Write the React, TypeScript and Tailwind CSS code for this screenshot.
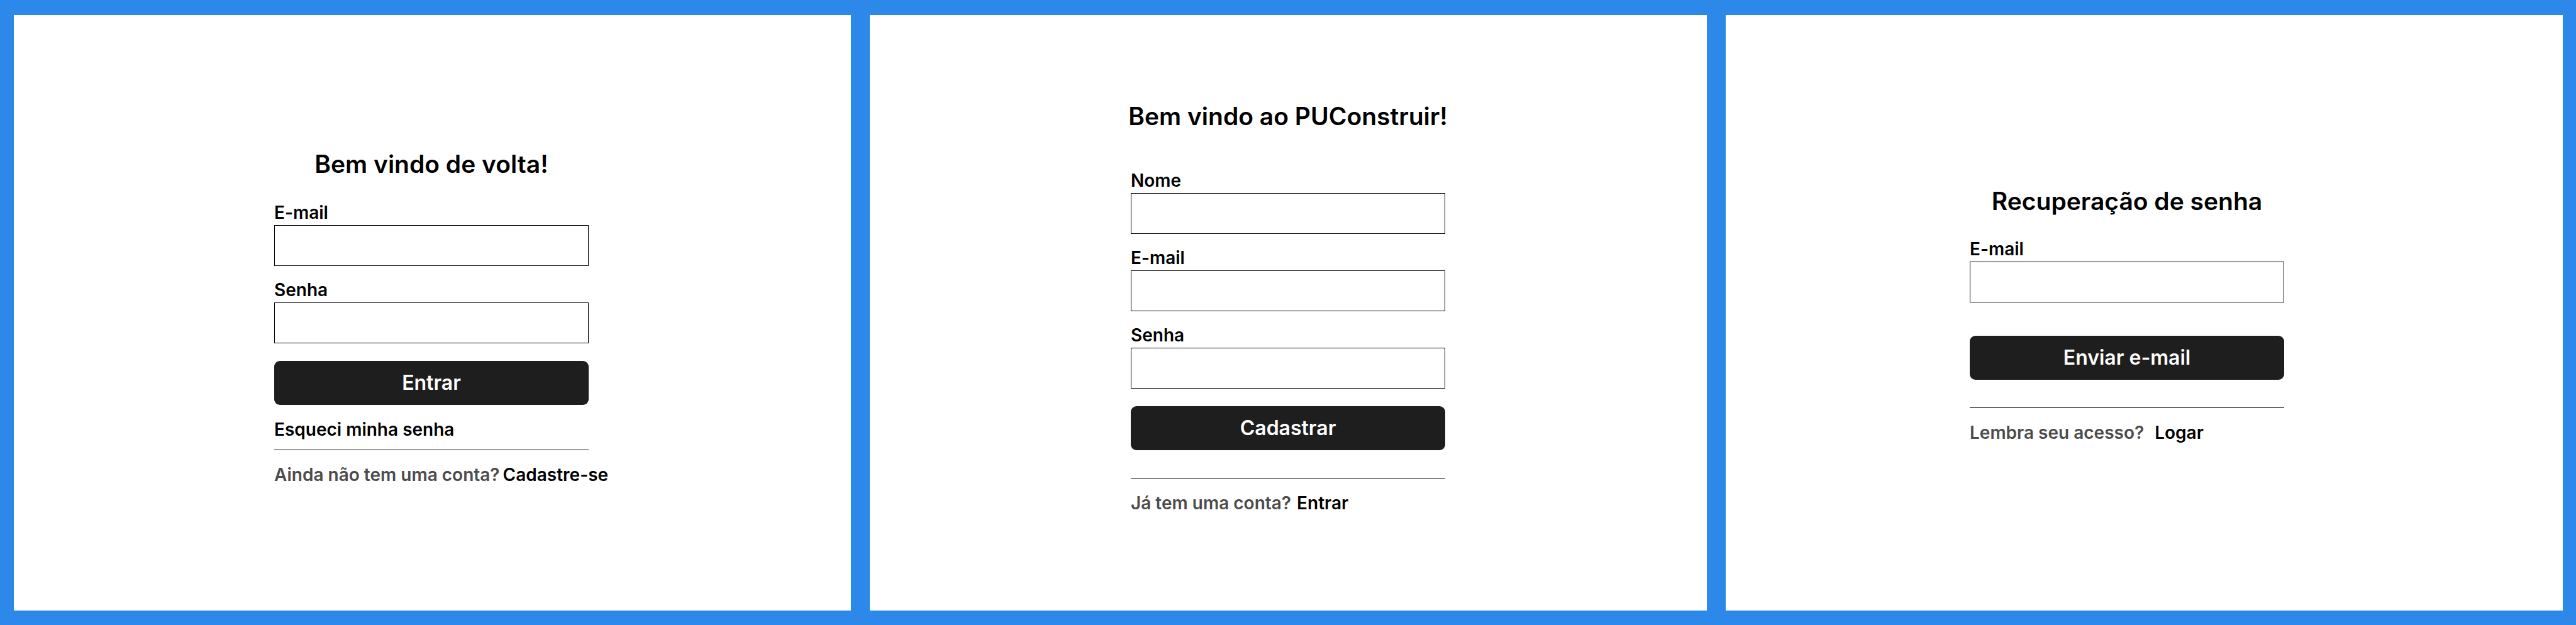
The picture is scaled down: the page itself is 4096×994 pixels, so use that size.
import type { ReactNode } from "react";

function Screen({ className, children }: { className: string; children: ReactNode }) {
  return (
    <section className={`flex flex-col items-center bg-white ${className}`}>
      <form className="flex w-full max-w-[500px] flex-col" onSubmit={(e) => e.preventDefault()}>
        {children}
      </form>
    </section>
  );
}

function Title({ children }: { children: ReactNode }) {
  return (
    <h1 className="self-center whitespace-nowrap text-[39px] leading-[48px]">
      {children}
    </h1>
  );
}

function Field({ id, label, type }: { id: string; label: string; type: string }) {
  return (
    <div className="flex flex-col gap-[3px]">
      <label htmlFor={id} className="self-start">
        {label}
      </label>
      <input
        id={id}
        type={type}
        className="h-[65px] w-full border border-black bg-white px-4 outline-none"
      />
    </div>
  );
}

function Submit({ className, children }: { className: string; children: ReactNode }) {
  return (
    <button
      type="submit"
      className={`h-[70px] w-full rounded-[9px] bg-[#1e1e1e] text-[32px] leading-[40px] text-white ${className}`}
    >
      {children}
    </button>
  );
}

function Footer({
  className,
  question,
  action,
}: {
  className: string;
  question: string;
  action: string;
}) {
  return (
    <p className={`mt-[22px] flex items-baseline whitespace-nowrap ${className}`}>
      <span className="text-[#4c4c4c]">{question}</span>
      <a href="#">{action}</a>
    </p>
  );
}

export default function App() {
  return (
    <main className="grid min-h-screen grid-cols-3 gap-[30px] bg-[#2c89e9] pt-6 pr-[21px] pb-[23px] pl-[22px] font-['Inter',sans-serif] text-[28px] leading-[34px] font-semibold text-black">
      <Screen className="pt-[213px] pr-[3px]">
        <Title>Bem vindo de volta!</Title>
        <div className="mt-9 flex flex-col gap-[21px]">
          <Field id="login-email" label="E-mail" type="email" />
          <Field id="login-senha" label="Senha" type="password" />
        </div>
        <Submit className="mt-7">Entrar</Submit>
        <a href="#" className="mt-[22px] self-start">
          Esqueci minha senha
        </a>
        <hr className="mt-[15px] border-black" />
        <Footer className="gap-[5px]" question="Ainda não tem uma conta?" action="Cadastre-se" />
      </Screen>

      <Screen className="pt-[137px] pr-px">
        <Title>Bem vindo ao PUConstruir!</Title>
        <div className="mt-[61px] flex flex-col gap-[21px]">
          <Field id="cadastro-nome" label="Nome" type="text" />
          <Field id="cadastro-email" label="E-mail" type="email" />
          <Field id="cadastro-senha" label="Senha" type="password" />
        </div>
        <Submit className="mt-7">Cadastrar</Submit>
        <hr className="mt-11 border-black" />
        <Footer className="gap-[9px]" question="Já tem uma conta?" action="Entrar" />
      </Screen>

      <Screen className="pt-[272px] pr-[55px]">
        <Title>Recuperação de senha</Title>
        <div className="mt-[35px] flex flex-col">
          <Field id="recuperar-email" label="E-mail" type="email" />
        </div>
        <Submit className="mt-[53px]">Enviar e-mail</Submit>
        <hr className="mt-11 border-black" />
        <Footer className="gap-[17px]" question="Lembra seu acesso?" action="Logar" />
      </Screen>
    </main>
  );
}
